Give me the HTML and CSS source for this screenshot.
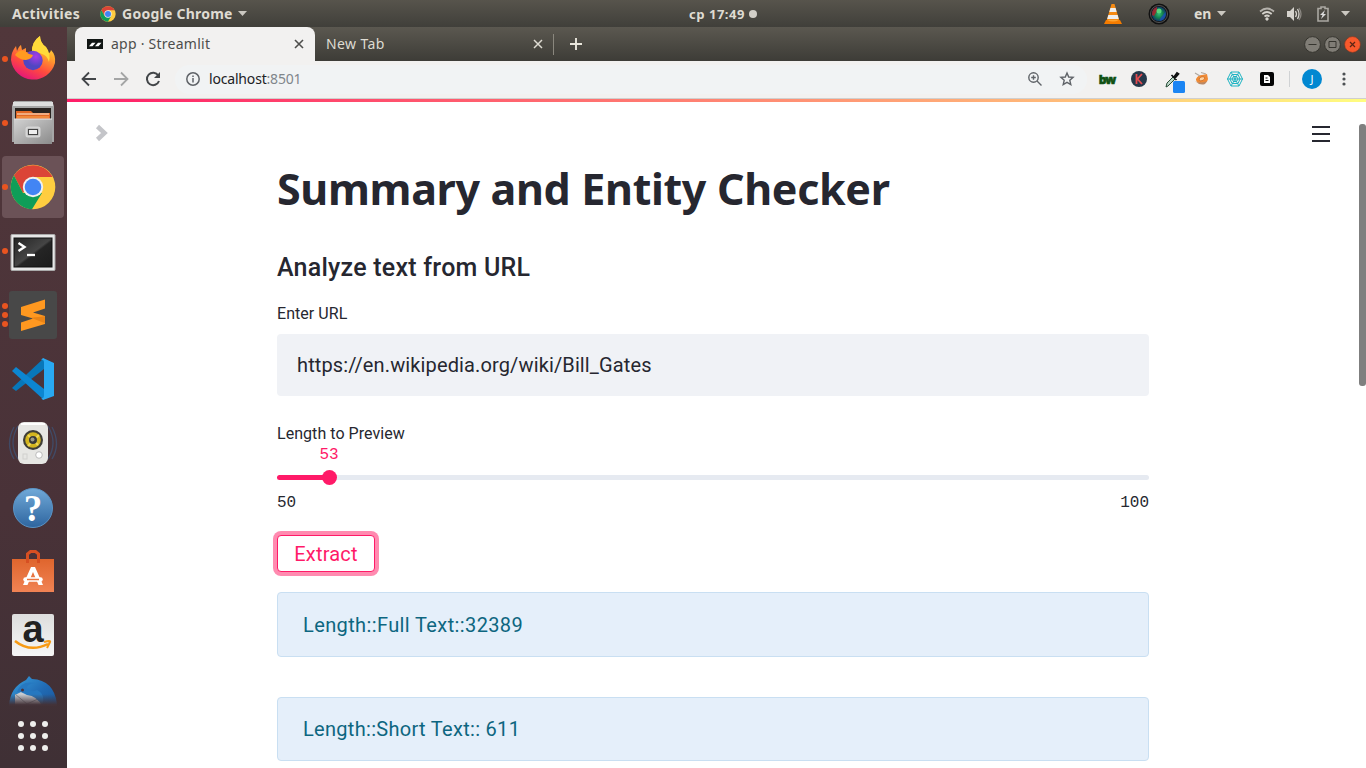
FILE: index.html
```html
<!DOCTYPE html>
<html lang="en">
<head>
<meta charset="utf-8">
<title>app · Streamlit</title>
<link rel="stylesheet" href="styles.css">
</head>
<body>
<header class="topbar">
  <span class="activities">Activities</span>
  <svg class="mini-chrome" width="16" height="16" viewBox="0 0 48 48"><circle cx="24" cy="24" r="23" fill="#ffcd40"/><path d="M4 12.500A23 23 0 0 1 44 12.500H24L14 30z" fill="#db4437"/><path d="M4 12.500A23 23 0 0 0 24 47L34 29.500 14 30z" fill="#0f9d58"/><circle cx="24" cy="24" r="11" fill="#f1f1f1"/><circle cx="24" cy="24" r="9" fill="#4285f4"/></svg>
  <span class="appname">Google Chrome</span>
  <i class="caret"></i>
  <span class="clock">ср 17:49</span><i class="clock-dot"></i>
  <div class="tray">
    <svg width="20" height="22" viewBox="0 0 20 22"><path d="M8.500 1h3l5 17h-13z" fill="#f58a13"/><path d="M7.400 5h5.200l1 4H6.300zM5.300 12h9.400l1 4H4.200z" fill="#eee"/><path d="M3 17h14l2 4H1z" fill="#f57c00"/><path d="M4 17q6 3 12 0" fill="#ffa530"/></svg>
    <svg class="lens" width="22" height="22" viewBox="0 0 22 22"><defs><radialGradient id="lens"><stop offset="0" stop-color="#35b87a"/><stop offset=".5" stop-color="#14854d"/><stop offset="1" stop-color="#113568"/></radialGradient></defs><circle cx="11" cy="11" r="10.500" fill="#111"/><circle cx="11" cy="11" r="8.500" fill="none" stroke="#555"/><circle cx="11" cy="11" r="7.300" fill="url(#lens)"/><path d="M4 12a7 7 0 0 1 5-8L9 8 6 13z" fill="#b51f29" opacity=".8"/><path d="M17.500 9a7 7 0 0 1-6 9l1-3z" fill="#1d4fb5" opacity=".8"/><circle cx="11" cy="8" r="2.500" fill="#59d47c"/></svg>
    <span class="lang">en</span><i class="caret lang-caret"></i>
    <svg class="wifi" width="16" height="16" viewBox="0 0 16 16" fill="none" stroke="#d6d3cd" stroke-width="1.700"><path d="M1 5.500q7-6 14 0" opacity=".75"/><path d="M3.300 8q4.700-4 9.400 0M5.500 10.500q2.500-2 5 0"/><circle cx="8" cy="13" r="1.200" fill="#d6d3cd" stroke-width="1"/></svg>
    <svg class="sound" width="16" height="16" viewBox="0 0 16 16"><path d="M1 5h3l4-4v14l-4-4H1z" fill="#d6d3cd"/><path d="M9.500 5q2 3 0 6M11.500 3q3 5 0 10" fill="none" stroke="#d6d3cd" stroke-width="1.300"/><path d="M13 2q4 6 0 12" fill="none" stroke="#8b8882" stroke-width="1.300"/></svg>
    <svg class="battery" width="12" height="16" viewBox="0 0 12 16"><path d="M1 2.500h3V1h4v1.500h3V15H1z" fill="none" stroke="#aaa8a2" stroke-width="1.600"/><path d="M8 4L3 9h2.500L4 13l5-5H6.500z" fill="#ddd"/></svg>
    <i class="caret"></i>
  </div>
</header>
<div class="desktop">
  <nav class="dock">
    <div class="slot"><span class="dots"><i></i></span>
      <svg width="48" height="48" viewBox="0 0 48 48"><defs><linearGradient id="ff" x1=".8" y1="0" x2=".3" y2="1"><stop offset="0" stop-color="#fff44f"/><stop offset=".35" stop-color="#ffa62b"/><stop offset=".68" stop-color="#ff4b3e"/><stop offset="1" stop-color="#e3137d"/></linearGradient><radialGradient id="globe" cx=".65" cy=".3"><stop offset="0" stop-color="#a83be8"/><stop offset="1" stop-color="#5046c2"/></radialGradient></defs><path d="M2 25Q2 17 7 11l1 5Q10 11 12 10l1 5 4-2v4l6 1Q22 7 31 1q0 7 6 11 1 2 2 7 3-2 3-4 5 5 4 13A22.500 22.500 0 0 1 2 25z" fill="url(#ff)"/><path d="M23 18Q22 7 31 1q0 7 6 11 5 6 3 15-2-7-7-8-5-3-10-1z" fill="#ffdb3a"/><circle cx="24" cy="25.500" r="9.700" fill="url(#globe)"/><path d="M6 20q4-6 9-4 4 3 9 4-1 4-7 5-6 0-11-5z" fill="#ff9b20"/></svg></div>
    <div class="slot"><span class="dots"><i></i></span>
      <svg width="48" height="48" viewBox="0 0 48 48"><defs><linearGradient id="grey" x1="0" y1="0" x2="1" y2="1"><stop offset="0" stop-color="#d2d2d2"/><stop offset="1" stop-color="#8b8b8b"/></linearGradient></defs><path d="M3 7L5 2h38l2 5v36H3z" fill="#a6a6a6"/><path d="M4 3h40v4H4z" fill="#dedede"/><path d="M6 9h36v11H6z" fill="#292320"/><path d="M7 12h15l2 2h17v8H7z" fill="#e26725"/><path d="M8 15h32" stroke="#fff0dc"/><path d="M8 18h32" stroke="#ffae55"/><path d="M5 20h38v25H5z" fill="url(#grey)"/><path d="M5 20h38" stroke="#e6e6e6"/><rect x="17.500" y="28.500" width="13" height="9" rx="1.500" fill="#ababab" stroke="#d6d6d6" stroke-width="2"/><rect x="19.500" y="30.500" width="9" height="5" fill="#eee" stroke="#444"/></svg></div>
    <div class="slot active"><span class="dots"><i></i></span>
      <svg width="48" height="48" viewBox="0 0 48 48"><circle cx="24" cy="24" r="22.300" fill="#ffcd40"/><path d="M5 12.500A22.300 22.300 0 0 1 43.500 14H24l-10 16z" fill="#db4437"/><path d="M5 12.500A22.300 22.300 0 0 0 23 46.300L33 30 14 30z" fill="#0f9d58"/><circle cx="24" cy="24" r="10.200" fill="#f1f1f1"/><circle cx="24" cy="24" r="8.300" fill="#4285f4"/></svg></div>
    <div class="slot"><span class="dots"><i></i></span>
      <svg width="48" height="48" viewBox="0 0 48 48"><defs><linearGradient id="term" x1="0" y1="0" x2="1" y2="1"><stop offset="0" stop-color="#242424"/><stop offset=".5" stop-color="#454545"/><stop offset=".55" stop-color="#252525"/><stop offset="1" stop-color="#1c1c1c"/></linearGradient></defs><rect x="2" y="7.500" width="44" height="36" rx="1" fill="#e7e7e7" stroke="#aaa"/><rect x="5" y="11" width="38" height="29" fill="url(#term)" stroke="#111"/><path d="M9.500 16l6 4-6 4" fill="none" stroke="#fff" stroke-width="2.400"/><path d="M18 28h8" stroke="#fff" stroke-width="2.300"/></svg></div>
    <div class="slot"><span class="dots"><i></i><i></i><i></i></span>
      <svg width="48" height="48" viewBox="0 0 48 48"><rect width="48" height="48" rx="3" fill="#484848"/><path d="M12 16L36 8.500v9L24 21.500l12 3.500v8L12 40v-8.500l12-4L12 24z" fill="#ff9820"/><path d="M22 26.800l14-1.500v7z" fill="#e98316"/></svg></div>
    <div class="slot">
      <svg width="48" height="48" viewBox="0 0 48 48"><path d="M3 33l4 3L35 14V3z" fill="#0877b9"/><path d="M3 16l4-4 28 22v11z" fill="#0c86d1"/><path d="M34 3l11 5v33l-11 4-2-2q3 1 3-3V8q0-4-3-3z" fill="#29a9f2"/></svg></div>
    <div class="slot">
      <svg width="48" height="48" viewBox="0 0 48 48"><g fill="none" stroke="#3d5375" stroke-width="1.300" opacity=".75"><path d="M5 8q-9 17 0 32M9 7Q-1 24 9 40M43 8q9 17 0 32M39 7q10 17 0 33"/></g><rect x="9" y="3" width="30" height="42" rx="6" fill="#e6e6e3"/><path d="M12 5h24" stroke="#fff" stroke-width="2"/><circle cx="24" cy="21" r="10" fill="#3f3e37"/><circle cx="24" cy="21" r="7.800" fill="#d3b51f"/><path d="M19 16l10 10M30 16L19 27" stroke="#f1da59" stroke-width="2"/><circle cx="24" cy="21" r="4" fill="#3a3a38"/><circle cx="23.500" cy="20.500" r="2" fill="#9c9b87"/><circle cx="30" cy="36" r="3.300" fill="#fff" stroke="#bbb"/><rect x="14" y="35" width="4" height="5" fill="none" stroke="#d0d0ce"/></svg></div>
    <div class="slot">
      <svg width="48" height="48" viewBox="0 0 48 48"><defs><linearGradient id="help" x2="0" y2="1"><stop stop-color="#70a9d8"/><stop offset="1" stop-color="#2e659f"/></linearGradient></defs><circle cx="24" cy="25" r="19.500" fill="url(#help)" stroke="#5a94c6"/><text x="24" y="38" class="question">?</text></svg></div>
    <div class="slot">
      <svg width="48" height="48" viewBox="0 0 48 48"><defs><linearGradient id="bag" x2="0" y2="1"><stop stop-color="#df652d"/><stop offset="1" stop-color="#f18354"/></linearGradient></defs><path d="M3 12h42v33H3z" fill="url(#bag)"/><path d="M18.500 16V7l3-2.500h5l3 2.500v9" fill="none" stroke="#d64f22" stroke-width="3"/><path d="M22 20h4l8 18h-4.500l-5.500-13-5.500 13H14z" fill="#fff"/><path d="M16.500 32.500h15" stroke="#fff" stroke-width="4.500" stroke-linecap="round"/><path d="M18 32.500h12" stroke="#ec7540" stroke-width="1.500"/></svg></div>
    <div class="slot">
      <svg width="48" height="48" viewBox="0 0 48 48"><defs><linearGradient id="paper" x2="0" y2="1"><stop stop-color="#ddd"/><stop offset="1" stop-color="#f6f6f6"/></linearGradient></defs><rect x="3" y="3" width="42" height="42" rx="2" fill="url(#paper)"/><text x="24" y="31" class="amazon">a</text><path d="M6 30q15 12 33 3" fill="none" stroke="#f79a14" stroke-width="2.500"/><path d="M35 31q7-2 6 0l-3 6" fill="none" stroke="#f79a14" stroke-width="2"/></svg></div>
    <div class="slot clipped">
      <svg width="48" height="48" viewBox="0 0 48 48"><defs><linearGradient id="bird" x2="1" y2="1"><stop stop-color="#39a1df"/><stop offset=".5" stop-color="#216bb4"/><stop offset="1" stop-color="#164d91"/></linearGradient><linearGradient id="fade" x2="0" y2="1"><stop offset=".4" stop-color="#443338" stop-opacity="0"/><stop offset=".62" stop-color="#433238"/></linearGradient></defs><path d="M0 31Q1 12 17 5l3-4 3 3q22 1 25 25v14H0z" fill="url(#bird)"/><path d="M6 20l6-3 16 2 5 9-2 10H6z" fill="#c9cdd2"/><path d="M6 19l12 10 13-6" fill="none" stroke="#8b9096"/><path d="M8 17Q12 5 26 8q-8 1-8 5 4 5 10 2 9 4 5 16-5-10-15-11l-6-3z" fill="#2678c0"/><circle cx="13.500" cy="15" r="1.500" fill="#49313b"/><path d="M0 0h48v48H0z" fill="url(#fade)"/></svg></div>
    <div class="apps"><i></i><i></i><i></i><i></i><i></i><i></i><i></i><i></i><i></i></div>
  </nav>
  <section class="browser">
    <div class="tabstrip">
      <div class="tab current">
        <svg width="16" height="10" viewBox="0 0 16 10"><path d="M0 0h16v10H0z" fill="#111614"/><path d="M2 7.200l3-3.500h3.500L5.500 7.200zM8 7.200l3-3.500h3.500l-3 3.500z" fill="#fff"/></svg>
        <span class="tabtitle">app · Streamlit</span>
        <svg class="close" width="10" height="10" viewBox="0 0 10 10"><path d="M1 1l8 8M9 1L1 9" stroke="#4e4e4c" stroke-width="1.600"/></svg>
      </div>
      <div class="tab">
        <span class="tabtitle newtab">New Tab</span>
        <svg class="close" width="10" height="10" viewBox="0 0 10 10"><path d="M1 1l8 8M9 1L1 9" stroke="#dedbd2" stroke-width="1.500"/></svg>
      </div>
      <i class="tabsep"></i>
      <svg class="plus" width="12" height="12" viewBox="0 0 12 12"><path d="M0 6h12M6 0v12" stroke="#e9e6dc" stroke-width="1.900"/></svg>
      <div class="wincontrols">
        <svg width="17" height="17" viewBox="0 0 17 17"><circle cx="8.500" cy="8.500" r="7.900" fill="#807d76" stroke="#36352f"/><path d="M4.500 8.500h8" stroke="#36352f"/></svg>
        <svg width="17" height="17" viewBox="0 0 17 17"><circle cx="8.500" cy="8.500" r="7.900" fill="#807d76" stroke="#36352f"/><path d="M5 5.500h7v6H5z" fill="none" stroke="#36352f"/></svg>
        <svg width="17" height="17" viewBox="0 0 17 17"><circle cx="8.500" cy="8.500" r="7.900" fill="#f8592c" stroke="#7a3520" stroke-width=".6"/><path d="M6 6l5 5M11 6l-5 5" stroke="#5b2514" stroke-width="1.200"/></svg>
      </div>
    </div>
    <div class="toolbar">
      <svg class="nav" width="16" height="16" viewBox="0 0 16 16" fill="none" stroke="#434649" stroke-width="1.800"><path d="M15 8H2M8 1.500L1.500 8 8 14.500"/></svg>
      <svg class="nav" width="16" height="16" viewBox="0 0 16 16" fill="none" stroke="#a4a5a5" stroke-width="1.800"><path d="M1 8h13M8 1.500L14.500 8 8 14.500"/></svg>
      <svg class="nav" width="16" height="16" viewBox="0 0 16 16"><path d="M13.300 4.500A6.200 6.200 0 1 0 14 10" fill="none" stroke="#434649" stroke-width="2"/><path d="M15 1v6H9z" fill="#434649"/></svg>
      <div class="omnibox">
        <svg width="14" height="14" viewBox="0 0 14 14"><circle cx="7" cy="7" r="6.200" fill="none" stroke="#5f6368" stroke-width="1.500"/><path d="M7 6v4.500M7 3.400v1.500" stroke="#5f6368" stroke-width="1.500"/></svg>
        <span class="url">localhost<span class="port">:8501</span></span>
        <span class="tool first"><svg width="16" height="16" viewBox="0 0 16 16" fill="none" stroke="#5f6368" stroke-width="1.400"><circle cx="6.500" cy="6.500" r="4.700"/><path d="M10 10l4.500 4.500M4.200 6.500h4.600M6.500 4.200v4.600"/></svg></span>
        <span class="tool"><svg width="16" height="16" viewBox="0 0 16 16"><path d="M8 2l1.700 4 4.400.4-3.300 2.900 1 4.300L8 11.400l-3.800 2.200 1-4.300-3.300-2.900L6.300 6z" fill="none" stroke="#5f6368" stroke-width="1.400"/></svg></span>
      </div>
      <div class="extensions">
        <span class="tool bw">bw</span>
        <span class="tool"><svg width="16" height="16" viewBox="0 0 16 16"><circle cx="8" cy="8" r="8" fill="#26384a"/><path d="M5.500 3v10M11 3L6.500 8l4.500 5" fill="none" stroke="#e34c51" stroke-width="1.800"/></svg></span>
        <span class="tool"><svg class="picker" width="22" height="24" viewBox="0 0 22 24"><path d="M3 18l1-4 6-6 2 2-7 7z" fill="#bcd5c7" stroke="#284d37"/><path d="M8.500 6l5 5M11 8l3-4 1.500 1-3.500 4z" stroke="#111" stroke-width="1.700" fill="#111"/><rect x="10" y="12" width="12" height="12" rx="1.500" fill="#1b85f3"/></svg></span>
        <span class="tool"><svg class="fox" width="16" height="16" viewBox="0 0 16 16"><path d="M2 8q2-4 6-4l5-1 1 5q-1 5-6 5-5-1-6-4z" fill="#f08a35"/><path d="M1 10q5 3 12 0l-2 3q-5 2-10-3z" fill="#b98967"/><path d="M5 8q3-4 6-1-1 3-5 3z" fill="#ffd2a0" stroke="#c66a25" stroke-width=".8"/><path d="M1 2l5 3M7 1.500l5 1.500" stroke="#b0a9a2" stroke-width="1.200"/></svg></span>
        <span class="tool"><svg width="16" height="16" viewBox="0 0 16 16" fill="none" stroke="#20b4c3"><path d="M4 1h8l3.500 7-3.500 7H4L.5 8zM5 3.500h6L13 8l-2 4.500H5L3 8zM6.500 5.500h3L11 8l-1.500 2.500h-3L5 8zM4 1l8 14M12 1L4 15M0 8h16"/></svg></span>
        <span class="tool"><svg width="14" height="14" viewBox="0 0 14 14"><rect width="14" height="14" rx="2" fill="#050505"/><path d="M4 3h4l2 2v6H4z" fill="#fff"/><path d="M5.500 6h2M5.500 8.500h3" stroke="#111"/></svg></span>
      </div>
      <i class="toolsep"></i>
      <span class="avatar">J</span>
      <svg class="kebab" width="4" height="14" viewBox="0 0 4 14" fill="#4d5053"><circle cx="2" cy="2" r="1.600"/><circle cx="2" cy="7" r="1.600"/><circle cx="2" cy="12" r="1.600"/></svg>
    </div>
    <div class="decoration"></div>
    <div class="view">
      <div class="page">
        <div class="pagehead">
          <svg width="14" height="18" viewBox="0 0 14 18"><path d="M2.500 2.500L9.500 9l-7 6.500" fill="none" stroke="#c4c5c9" stroke-width="4.500"/></svg>
          <svg width="19" height="20" viewBox="0 0 19 20"><path d="M1 3h18M1 10h18M1 17h18" stroke="#262730" stroke-width="2"/></svg>
        </div>
        <main class="main">
          <h1 class="title">Summary and Entity Checker</h1>
          <h2 class="subtitle">Analyze text from URL</h2>
          <div class="label urllabel">Enter URL</div>
          <div class="input">https://en.wikipedia.org/wiki/Bill_Gates</div>
          <div class="label lenlabel">Length to Preview</div>
          <div class="value">53</div>
          <div class="slider"><i class="filled"></i><i class="thumb"></i><i class="rest"></i></div>
          <div class="range"><span>50</span><span>100</span></div>
          <button class="extract">Extract</button>
          <div class="alert full">Length::Full Text::32389</div>
          <div class="alert short">Length::Short Text:: 611</div>
        </main>
      </div>
      <div class="scroll"><i class="scrollthumb"></i></div>
    </div>
  </section>
</div>
</body>
</html>
```
FILE: styles.css
```css
* { box-sizing: border-box; }
body { margin: 0; width: 1366px; height: 768px; overflow: hidden; display: flex; flex-direction: column; font-family: "Noto Sans", sans-serif; }
i { display: block; flex: none; }
svg { display: block; flex: none; overflow: visible; }

.topbar { height: 27px; flex: none; display: flex; align-items: center; padding: 0 16px 0 12px; background: linear-gradient(#57544c, #403f3a); color: #dfdbd2; font-size: 14px; font-weight: 700; white-space: nowrap; }
.activities { width: 88px; letter-spacing: .3px; }
.mini-chrome { margin-right: 6px; }
.appname { width: 112px; letter-spacing: .25px; }
.caret { width: 9px; height: 5px; margin-left: 4px; background: #cbc8c1; clip-path: polygon(0 0, 100% 0, 50% 100%); }
.clock { margin-left: 442px; width: 57px; font-size: 13px; letter-spacing: .5px; }
.clock-dot { width: 8px; height: 8px; margin-left: 3px; border-radius: 50%; background: #d2cfc8; }
.tray { margin-left: auto; display: flex; align-items: center; }
.lens { margin-left: 25px; }
.lang { margin-left: 24px; width: 18px; }
.lang-caret { margin-left: 5px; }
.wifi { margin-left: 33px; }
.sound { margin-left: 11px; }
.battery { margin-left: 15px; margin-right: 8px; }

.desktop { flex: 1; min-height: 0; display: flex; }
.dock { width: 67px; flex: none; background: linear-gradient(#51373b, #493238 65%, #3f3035); }
.slot { height: 64px; width: 66px; padding-left: 9px; display: flex; align-items: center; position: relative; }
.active { background: linear-gradient(#6b5257, #6b5257) 2px 1px / 62px 62px no-repeat; clip-path: inset(1px 2px 1px 2px round 4px); }
.dots { position: absolute; left: 2px; top: 0; bottom: 0; display: flex; flex-direction: column; justify-content: center; gap: 3px; }
.dots i { width: 6px; height: 6px; border-radius: 50%; background: #e95420; }
.clipped { height: 39px; padding-top: 8px; align-items: flex-start; overflow: hidden; }
.apps { display: grid; grid-template-columns: repeat(3, 6px); gap: 6px; padding: 15px 0 0 18px; }
.apps i { width: 6px; height: 6px; border-radius: 50%; background: #eeeeec; }
.question { font: 700 37px "Liberation Serif", serif; fill: #fff; text-anchor: middle; }
.amazon { font: 700 38px "Liberation Sans", sans-serif; fill: #222; text-anchor: middle; }

.browser { flex: 1; min-width: 0; display: flex; flex-direction: column; background: #fff; }
.tabstrip { height: 34px; flex: none; display: flex; align-items: center; padding: 0 5px 0 8px; background: linear-gradient(#5b5850, #3d3c37); }
.tab { width: 239px; height: 34px; display: flex; align-items: center; padding: 0 11px; color: #dedbd2; font-size: 14px; }
.current { width: 240px; padding: 0 11px 0 12px; background: #f2f1f0; border-radius: 8px 8px 0 0; color: #4d4d4b; }
.tabtitle { margin-left: 8px; padding-bottom: 2px; letter-spacing: .25px; }
.newtab { margin-left: 0; letter-spacing: .4px; }
.close { margin-left: auto; }
.tabsep { width: 1px; height: 21px; margin-left: -1px; background: #8a877e; }
.plus { margin-left: 16px; }
.wincontrols { margin-left: auto; display: flex; gap: 3px; }

.toolbar { height: 38px; flex: none; display: flex; align-items: center; background: #f2f1f0; border-bottom: 1px solid #d0cfce; padding: 0 6px 1px 14px; }
.nav { margin-right: 16px; }
.omnibox { width: 912px; height: 29px; margin-left: -2px; border-radius: 15px; background: #f1f3f4; display: flex; align-items: center; padding: 0 4px 0 11px; }
.url { margin-left: 9px; padding-bottom: 2px; font-size: 14px; letter-spacing: -.18px; color: #202124; }
.port { color: #80868b; }
.tool { width: 32px; height: 28px; flex: none; display: flex; align-items: center; justify-content: center; }
.first { margin-left: auto; }
.extensions { display: flex; margin-left: 4px; }
.bw { color: #105012; font-size: 12px; font-weight: 900; letter-spacing: -1px; -webkit-text-stroke: .6px #105012; }
.picker { margin: 4px 0 0 6px; }
.fox { margin-right: 2px; }
.toolsep { width: 1px; height: 16px; margin-left: 6px; background: #d0d2d4; }
.avatar { width: 20px; height: 20px; margin-left: 12px; border-radius: 50%; background: #0288d1; color: #fff; font-size: 11px; line-height: 20px; text-align: center; }
.kebab { margin-left: auto; margin-right: 14px; }

.decoration { height: 3px; flex: none; background: linear-gradient(90deg, #ff1d68, #ff7070 40%, #ffb879 75%, #fffd80); }
.view { flex: 1; min-height: 0; display: flex; }
.page { flex: 1; color: #262730; font-family: Roboto, sans-serif; }
.pagehead { height: 64px; display: flex; justify-content: space-between; padding: 22px 29px 0 28px; }
.main { width: 872px; margin-left: 210px; display: flex; flex-direction: column; white-space: nowrap; }
.title { margin: -1px 0 0; height: 48px; font: 700 43px/48px "Noto Sans", sans-serif; letter-spacing: -.33px; }
.subtitle { margin: 39px 0 0; font-size: 25px; line-height: 32px; font-weight: 500; letter-spacing: .24px; }
.label { font-size: 16px; line-height: 20px; letter-spacing: .05px; }
.urllabel { margin-top: 20px; }
.input { height: 62px; margin-top: 10px; padding: 0 20px; border-radius: 4px; background: #f0f2f6; font-size: 20px; line-height: 63px; letter-spacing: .13px; }
.lenlabel { margin-top: 28px; }
.value { width: 104px; margin-top: 1px; font: 16px/20px "Liberation Mono", monospace; text-align: center; color: #ff1a68; }
.slider { height: 15px; margin-top: 5px; display: flex; align-items: center; }
.filled { width: 46px; height: 5px; border-radius: 3px 0 0 3px; background: #ff1a68; }
.thumb { width: 15px; height: 15px; margin: 0 -1px; border-radius: 50%; background: #ff1a68; position: relative; }
.rest { flex: 1; height: 5px; border-radius: 0 3px 3px 0; background: #e6eaf1; }
.range { margin-top: 8px; display: flex; justify-content: space-between; font: 16px/20px "Liberation Mono", monospace; }
.extract { width: 98px; height: 37px; margin-top: 22px; padding: 1px 0 0; border: 1px solid #ff1a68; border-radius: 4px; background: #fff; box-shadow: 0 0 0 4px #ff8bb0; color: #ff1a68; font: 20px/35px Roboto, sans-serif; letter-spacing: .2px; }
.alert { height: 65px; padding: 0 25px; border: 1px solid #c9dff2; border-radius: 4px; background: #e5effa; color: #0d6680; font-size: 20px; line-height: 65px; letter-spacing: .38px; }
.full { margin-top: 20px; }
.short { margin-top: 40px; height: 64px; line-height: 63px; letter-spacing: .3px; }
.scroll { width: 7px; flex: none; padding-top: 22px; }
.scrollthumb { width: 7px; height: 262px; border-radius: 3px; background: #7f7f7f; }
```
